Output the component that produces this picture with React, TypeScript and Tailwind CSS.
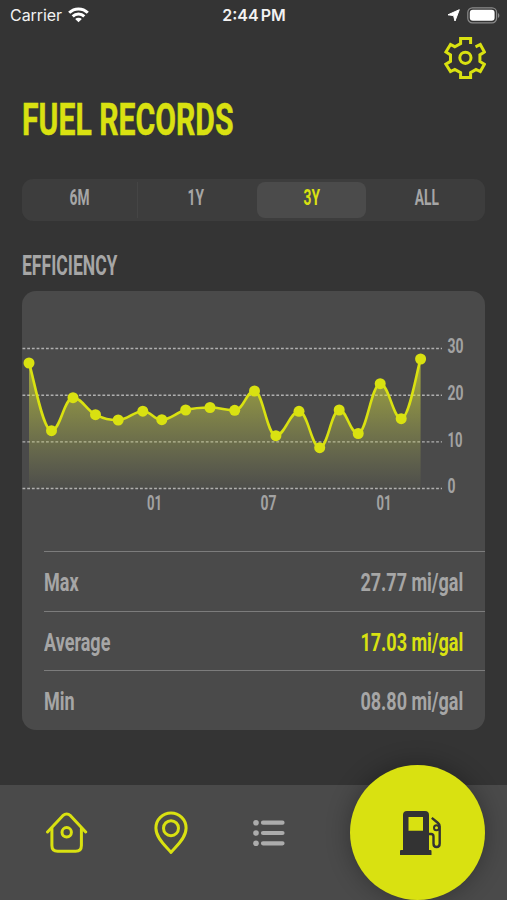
import React, { useState } from 'react'

interface Reading {
  x: number
  y: number
}

const readings: Reading[] = [
  { x: 7, y: 72 },
  { x: 29.5, y: 139.7 },
  { x: 51, y: 106.7 },
  { x: 73.5, y: 123.7 },
  { x: 96.2, y: 129 },
  { x: 120.8, y: 120.2 },
  { x: 139.8, y: 128.7 },
  { x: 163.7, y: 119 },
  { x: 188, y: 116.5 },
  { x: 212.7, y: 119.3 },
  { x: 232.5, y: 100 },
  { x: 253.9, y: 144.7 },
  { x: 277, y: 120.3 },
  { x: 297.7, y: 156.7 },
  { x: 317.2, y: 119 },
  { x: 336.2, y: 142.5 },
  { x: 358.2, y: 92.7 },
  { x: 379.2, y: 127.7 },
  { x: 398.6, y: 68 },
]

const gridLines = [
  { label: '30', y: 57.5, width: 16 },
  { label: '20', y: 104.2, width: 16 },
  { label: '10', y: 150.9, width: 15 },
  { label: '0', y: 197.5, width: 8 },
]

const months = [
  { label: '01', x: 125, width: 15 },
  { label: '07', x: 238.5, width: 16 },
  { label: '01', x: 354.5, width: 15 },
]

const stats = [
  { label: 'Max', value: '27.77 mi/gal', highlight: false },
  { label: 'Average', value: '17.03 mi/gal', highlight: true },
  { label: 'Min', value: '08.80 mi/gal', highlight: false },
]

const ranges = ['6M', '1Y', '3Y', 'ALL']

const SMOOTHING = 0.2

// vertical part of the curve handle, flat at peaks and dips
function slope(before: Reading, point: Reading, after: Reading) {
  if ((point.y - before.y) * (after.y - point.y) < 0) return 0
  return (after.y - before.y) * SMOOTHING
}

function smoothPath(points: Reading[]) {
  let d = `M${points[0].x} ${points[0].y}`
  for (let i = 1; i < points.length; i++) {
    const prev = points[i - 1]
    const cur = points[i]
    const before = points[i - 2] || prev
    const next = points[i + 1] || cur
    const c1x = prev.x + (cur.x - before.x) * SMOOTHING
    const c1y = prev.y + slope(before, prev, cur)
    const c2x = cur.x - (next.x - prev.x) * SMOOTHING
    const c2y = cur.y - slope(prev, cur, next)
    d += ` C${c1x} ${c1y} ${c2x} ${c2y} ${cur.x} ${cur.y}`
  }
  return d
}

function StatusBar() {
  return (
    <div className="grid h-[30px] grid-cols-3 items-center pl-[10px] pr-[7px] font-['Inter',sans-serif] text-[16px] text-[#f2f2f2]">
      <div className="flex items-center gap-[6px]">
        <span className="tracking-[-0.05px]">Carrier</span>
        <svg width="21" height="16" viewBox="0 0 21 16" fill="none" stroke="#fff" strokeWidth="3">
          <path d="M1.2 5.8a13.2 13.2 0 0 1 18.6 0" />
          <path d="M4.7 9.4a8.2 8.2 0 0 1 11.6 0" />
          <path d="M10.5 15.3 7.2 12a4.7 4.7 0 0 1 6.6 0z" fill="#fff" stroke="none" />
        </svg>
      </div>
      <div className="-ml-[2px] whitespace-nowrap text-center font-semibold [word-spacing:-2px]">2:44 PM</div>
      <div className="flex items-center justify-end gap-[7px]">
        <svg width="13" height="13" viewBox="0 0 13 13">
          <path d="M12.3 0.7 8 12 6.6 6.6 1 5.8z" fill="#fff" stroke="#fff" strokeWidth="1" strokeLinejoin="round" />
        </svg>
        <svg width="33" height="17" viewBox="0 0 33 17">
          <rect x="0.8" y="0.8" width="28.8" height="15" rx="4.6" fill="none" stroke="#8a8a8a" strokeWidth="1.2" />
          <rect x="2.8" y="2.8" width="24.8" height="11" rx="3" fill="#fff" />
          <path d="M31 6v5c1.8-.8 1.8-4.2 0-5z" fill="#8a8a8a" />
        </svg>
      </div>
    </div>
  )
}

function GearIcon() {
  return (
    <svg width="42" height="44" viewBox="0 0 42 44" fill="none" stroke="#d9e111" strokeWidth="3">
      <path d="M26.6 8V2.6H16.6V7.6L10.8 10.7 6.5 8.5 1.9 16 6.5 18.9V25.4L1.9 28.2 6.5 35.5 10.8 33.5 16.6 36.7V41.5H26.6V36.7L32 33.5 36.3 35.5 40.4 28.2 35.9 25.4V18.9L40.4 16 36.3 8.5 31.5 10.8" />
      <circle cx="21.4" cy="21.8" r="5.6" />
    </svg>
  )
}

function EfficiencyChart() {
  const line = smoothPath(readings)

  return (
    <svg className="block" width="463" height="260" viewBox="0 0 463 260">
      <defs>
        <linearGradient id="area" gradientUnits="userSpaceOnUse" x1="0" y1="68" x2="0" y2="197">
          <stop offset="0" stopColor="#d9e130" stopOpacity="0.66" />
          <stop offset="1" stopColor="#c8d060" stopOpacity="0.03" />
        </linearGradient>
      </defs>
      {gridLines.map((grid) => (
        <g key={grid.label}>
          <path d={`M0.5 ${grid.y}H420`} stroke="#b0b0b0" strokeWidth="1.4" strokeDasharray="2.8 1.9" />
          <text
            x="425.5"
            y={grid.y + 4.9}
            textLength={grid.width}
            lengthAdjust="spacingAndGlyphs"
            className="fill-[#a2a2a2] font-['Roboto',sans-serif] text-[20px] font-bold"
          >
            {grid.label}
          </text>
        </g>
      ))}
      <path d={`${line} V197.7 H${readings[0].x} Z`} fill="url(#area)" />
      <path d={line} fill="none" stroke="#d9e111" strokeWidth="2.6" />
      {readings.map((point) => (
        <circle key={point.x} cx={point.x} cy={point.y} r="5.5" fill="#d9e111" />
      ))}
      {months.map((month) => (
        <text
          key={month.x}
          x={month.x}
          y="219"
          textLength={month.width}
          lengthAdjust="spacingAndGlyphs"
          className="fill-[#a2a2a2] font-['Roboto',sans-serif] text-[21px] font-bold"
        >
          {month.label}
        </text>
      ))}
    </svg>
  )
}

function TabBar() {
  return (
    <nav className="flex h-[115px] bg-[#4a4a4a]">
      <button className="ml-[45px] mt-[26px] h-[44px] w-[44px]">
        <svg width="44" height="44" viewBox="0 0 44 44" fill="none" stroke="#d9e111" strokeWidth="3" strokeLinecap="round" strokeLinejoin="round">
          <path d="M2.5 21 17.8 4.7Q21.7 1.2 25.5 4.7L40.7 21" />
          <path d="M6.9 17.5V34.5Q6.9 40.3 12.7 40.3H30.6Q36.4 40.3 36.4 34.5V17.5" />
          <circle cx="21.7" cy="21.3" r="4.7" />
        </svg>
      </button>
      <button className="ml-[65px] mt-[26px] h-[44px] w-[34px]">
        <svg width="34" height="44" viewBox="0 0 34 44" fill="none" stroke="#d9e111" strokeWidth="3" strokeLinejoin="round">
          <path d="M17 41.5C13.5 36.5 1.9 28 1.9 17A15.1 15.1 0 0 1 32.1 17C32.1 28 20.5 36.5 17 41.5z" />
          <circle cx="17" cy="17.2" r="7.5" />
        </svg>
      </button>
      <button className="ml-[65px] mt-[34px] h-[28px] w-[33px]">
        <svg width="33" height="28" viewBox="0 0 33 28" stroke="#acacac" fill="#acacac" strokeLinecap="round">
          <g stroke="none">
            <circle cx="3" cy="3.7" r="2.8" />
            <circle cx="3" cy="14" r="2.8" />
            <circle cx="3" cy="24.3" r="2.8" />
          </g>
          <path d="M10 3.7H29.5M10 14H29.5M10 24.3H29.5" strokeWidth="4.2" />
        </svg>
      </button>
      <button className="-mt-5 ml-[64px] flex h-[135px] w-[135px] items-center justify-center rounded-full bg-[#d9e111] shadow-[0_0_24px_rgba(0,0,0,0.32)]">
        <svg className="ml-[6px]" width="42" height="44" viewBox="0 0 42 44">
          <path
            d="M3 39V4Q3 0 7 0H25Q29 0 29 4V39H30.5Q31.5 39 31.5 40V44H0V40Q0 39 1 39zM8.500 6V19.700H23V6z"
            fill="#333"
            fillRule="evenodd"
          />
          <path
            d="M29 23H31Q33.5 23 33.5 25.5V32.5C33.5 37.2 39.7 37.2 39.7 32.5V15.5Q39.7 13.5 38 12L31.8 6.8"
            fill="none"
            stroke="#333"
            strokeWidth="2.4"
          />
          <circle cx="36.5" cy="16.8" r="2.5" fill="none" stroke="#333" strokeWidth="2" />
        </svg>
      </button>
    </nav>
  )
}

export default function App() {
  const [range, setRange] = useState('3Y')

  return (
    <div className="flex h-[900px] w-[507px] flex-col overflow-hidden bg-[#343434] font-['Roboto',sans-serif] text-[#a6a6a6]">
      <StatusBar />
      <div className="flex h-[62px] justify-end pr-[21px] pt-[6px]">
        <GearIcon />
      </div>

      <h1 className="ml-[22px] h-[56px] w-[320px] origin-left scale-x-[0.67] whitespace-nowrap text-[45px] font-bold leading-[56px] text-[#d9e111] [-webkit-text-stroke:0.5px_#d9e111]">
        FUEL RECORDS
      </h1>

      <div className="mx-[22px] mt-[31px] grid h-[42px] grid-cols-4 rounded-[11px] bg-[#3d3d3d] py-[3px]">
        {ranges.map((item) => (
          <button
            key={item}
            onClick={() => setRange(item)}
            className={`flex justify-center text-[21.5px] font-bold leading-[32px] ${
              item === range
                ? 'mx-[3px] rounded-[8px] bg-[#4b4b4b] text-[#d9e111]'
                : item === '6M'
                  ? 'border-r border-[#454545]'
                  : ''
            }`}
          >
            <span className="inline-block scale-x-[0.64]">{item}</span>
          </button>
        ))}
      </div>

      <h2 className="ml-[22px] mt-[30px] h-[30px] w-[200px] origin-left scale-x-[0.65] whitespace-nowrap text-[27px] font-bold leading-[30px]">
        EFFICIENCY
      </h2>

      <div className="ml-[22px] mt-[10px] h-[439px] w-[463px] rounded-[14px] bg-[#4a4a4a]">
        <EfficiencyChart />
        <div className="pl-[22px]">
          {stats.map((stat) => (
            <div key={stat.label} className="flex h-[59.5px] items-center justify-between border-t-[1.5px] border-[#7c7c7c] pr-[22px] pt-[2px] text-[26.5px] font-bold">
              <span className="inline-block origin-left scale-x-[0.68]">{stat.label}</span>
              <span className={`inline-block origin-right scale-x-[0.68] whitespace-nowrap ${stat.highlight ? 'text-[#d9e111]' : ''}`}>
                {stat.value}
              </span>
            </div>
          ))}
        </div>
      </div>

      <div className="flex-1" />
      <TabBar />
    </div>
  )
}
